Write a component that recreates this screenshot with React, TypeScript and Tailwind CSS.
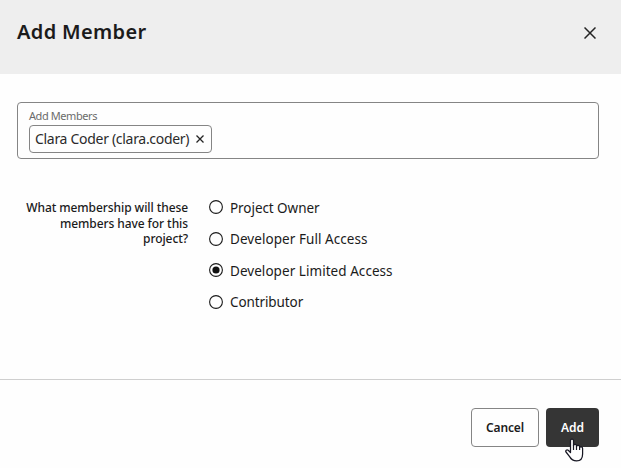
const roles = [
  { label: "Project Owner", tracking: "tracking-[-0.06px]" },
  { label: "Developer Full Access", tracking: "tracking-[0.06px]" },
  { label: "Developer Limited Access", tracking: "tracking-[0.05px]" },
  { label: "Contributor", tracking: "tracking-[-0.1px]" },
];

function Cross({ size, width }: { size: number; width: number }) {
  return (
    <svg width={size} height={size} viewBox={`0 0 ${size} ${size}`} fill="none" stroke="#242424" strokeWidth={width} className="shrink-0">
      <path d={`M.5 .5 ${size - 0.5} ${size - 0.5}M${size - 0.5} .5 .5 ${size - 0.5}`} />
    </svg>
  );
}

function HandCursor() {
  return (
    <svg className="absolute left-[19px] top-[30px]" width="20" height="24" viewBox="0 0 20 24">
      <path
        d="M5.5 14.5V2.6C5.5.6 8.5.6 8.5 2.6V7.4C9 6.1 11.5 6.1 11.5 7.7V8.3C12.1 7 14.6 7.2 14.6 8.8V9.4C15.3 8.5 17.6 8.8 17.6 10.5V16C17.6 20.5 15.2 22.9 11.6 22.9C8 22.9 6.3 21.6 4.8 18.9L1 14C.1 12.6 1.8 11.2 3.2 12.3Z"
        fill="#fff"
        stroke="#171723"
        strokeWidth="1.25"
        strokeLinejoin="round"
      />
      <path d="M8.5 7V12M11.5 8V12M14.6 9V12" stroke="#171723" strokeWidth="1.2" />
    </svg>
  );
}

export default function App() {
  return (
    <div className="flex h-[468px] w-[621px] flex-col overflow-hidden bg-[#fefefe] font-['Noto_Sans',sans-serif] text-[#1b1b1b]">
      <header className="flex h-[74px] shrink-0 items-start justify-between bg-[#eeeeee] pl-[17px] pr-[25px]">
        <h1 className="mt-[18px] whitespace-nowrap text-[20px] font-semibold leading-[28px] tracking-[0.35px]">Add Member</h1>
        <button aria-label="Close" className="mt-[27px]">
          <Cross size={12} width={1.5} />
        </button>
      </header>
      <main className="flex-1">
        <div className="ml-[17px] mt-[28px] h-[57px] w-[582px] rounded-[4px] border border-[#858585] pl-[11px] pt-[5px]">
          <div className="text-[11px] leading-[15px] tracking-[-0.42px] text-[#6b6b6b]">Add Members</div>
          <div className="mt-[2px] flex h-[28px] w-[183px] items-center justify-between rounded-[4px] border border-[#858585] pl-[5px] pr-[7px] text-[#2b2b2b]">
            <span className="whitespace-nowrap text-[14px] leading-[20px] tracking-[-0.3px]">Clara Coder (clara.coder)</span>
            <Cross size={8} width={1.3} />
          </div>
        </div>
        <div className="mt-[41px] flex">
          <p className="w-[188px] whitespace-nowrap text-right text-[12px] font-medium leading-[15.7px] tracking-[-0.08px]">
            What membership will these
            <br />
            members have for this
            <br />
            project?
          </p>
          <div className="ml-[21px] flex flex-col">
            {roles.map((role, i) => (
              <label key={role.label} className="flex h-[31.4px] items-start">
                <svg className="mt-[0.35px]" width="14" height="14" viewBox="0 0 14 14" fill="none">
                  <circle cx="7" cy="7" r="6.4" stroke="#1b1b1b" strokeWidth="1.1" />
                  {i === 2 && <circle cx="7" cy="7" r="3.6" fill="#111" />}
                </svg>
                <span className={`ml-[7px] whitespace-nowrap text-[13.5px] leading-[16px] ${role.tracking}`}>{role.label}</span>
              </label>
            ))}
          </div>
        </div>
      </main>
      <footer className="flex h-[89px] shrink-0 justify-end gap-[7px] border-t border-[#cfcfcf] pr-[22px] pt-[28px] text-[12px] font-semibold">
        <button className="h-[39px] w-[68px] rounded-[4px] border border-[#858585] tracking-[-0.1px]">Cancel</button>
        <div className="relative h-[39px] w-[53px]">
          <button className="h-full w-full rounded-[4px] bg-[#353535] text-white">Add</button>
          <HandCursor />
        </div>
      </footer>
    </div>
  );
}
